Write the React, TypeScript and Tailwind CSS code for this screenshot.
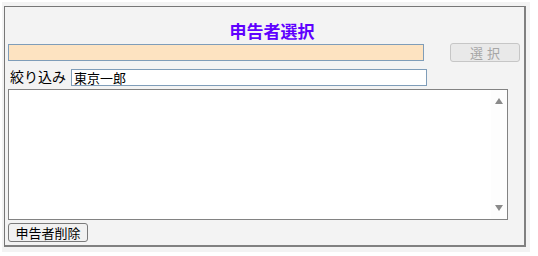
export default function App() {
  const jp = { fontFamily: '"Noto Sans CJK JP", "Noto Sans", sans-serif' }
  return (
    <div className="w-[538px] h-[256px] bg-white pt-[2px] pl-[2px]" style={jp}>
      <div className="w-[528px] h-[250px] bg-[#f3f3f3] pt-[4px] pl-[2px]">
        <div className="w-[522px] h-[241px] border-t border-l border-r-2 border-b-2 border-t-[#777777] border-l-[#777777] border-r-[#808080] border-b-[#808080] flex flex-col">
          <div className="shrink-0 mt-[12px] h-[22px] flex items-center justify-center pl-[15px] text-[17px] font-bold leading-none text-[#5f00ff]">
            申告者選択
          </div>
          <div className="shrink-0 mt-[2px] h-[19px] flex items-center">
            <div className="ml-[3px] w-[416px] h-[17px] bg-[#fde3c1] border border-[#7f9db9]" />
            <button className="ml-[26px] w-[70px] h-[19px] rounded-[3px] border border-[#c6c6c6] bg-[#e9e9e9] text-[13px] leading-none text-[#a6a6a6] tracking-[4px] pl-[4px]">
              選択
            </button>
          </div>
          <div className="shrink-0 mt-[4px] h-[20px] flex items-center">
            <span className="ml-[5px] w-[61px] shrink-0 text-[14px] leading-none text-black whitespace-nowrap">絞り込み</span>
            <div className="w-[356px] h-[17px] mt-[3px] bg-white border border-[#7f9db9] flex items-center pl-[2px] text-[13px] leading-none text-black">
              東京一郎
            </div>
          </div>
          <div className="shrink-0 mt-[3px] ml-[3px] w-[500px] h-[131px] bg-white border border-[#828282] flex justify-end">
            <div className="w-[16px] h-full bg-[#fdfdfd] flex flex-col items-center justify-between py-[8px]">
              <svg width="8" height="6" viewBox="0 0 8 6"><polygon points="4,0 8,6 0,6" fill="#8a8a8a" /></svg>
              <svg width="8" height="6" viewBox="0 0 8 6"><polygon points="0,0 8,0 4,6" fill="#8a8a8a" /></svg>
            </div>
          </div>
          <div className="shrink-0 mt-[3px] ml-[3px] flex">
            <button className="w-[80px] h-[19px] rounded-[3px] border border-[#7a7a7a] bg-[#f1f1f1] text-[13px] leading-none text-black">
              申告者削除
            </button>
          </div>
        </div>
      </div>
    </div>
  )
}
